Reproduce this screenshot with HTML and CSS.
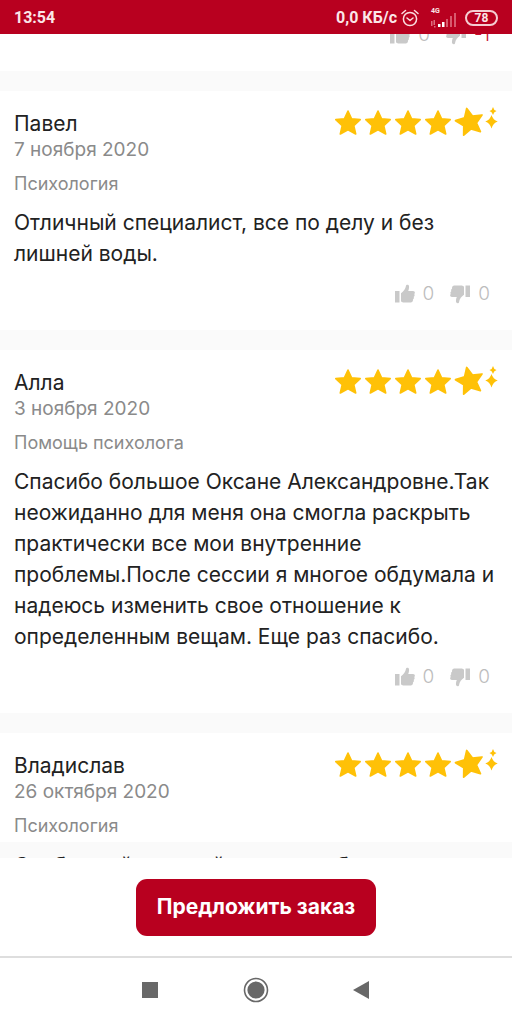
FILE: index.html
```html
<!DOCTYPE html>
<html lang="ru">
<head>
<meta charset="utf-8">
<meta name="viewport" content="width=device-width, initial-scale=1">
<title>Отзывы</title>
<link rel="stylesheet" href="styles.css">
</head>
<body>
<svg class="sprite" aria-hidden="true">
  <symbol id="star" viewBox="-14 -14 28 28">
    <path d="M0-12 3.600-4.200 12.200-3.400 5.800 2.600 7.700 11 0 6.800-7.700 11-5.800 2.600-12.200-3.400-3.600-4.200Z" stroke-width="1.600" stroke-linejoin="round"/>
  </symbol>
  <symbol id="rating" viewBox="0 0 164 32">
    <g fill="#ffc107" stroke="#ffc107">
      <use href="#star" x="-1" y="3" width="28" height="28"/>
      <use href="#star" x="29" y="3" width="28" height="28"/>
      <use href="#star" x="59" y="3" width="28" height="28"/>
      <use href="#star" x="89" y="3" width="28" height="28"/>
      <use href="#star" x="119" y="0" width="31" height="31" transform="rotate(-12 134.500 15.500)"/>
      <path stroke="none" d="M158 1q.6 3.200 3.500 4-2.900.8-3.500 4-.6-3.200-3.500-4 2.900-.8 3.500-4ZM156.500 9q1.600 5 6.200 6.500-4.600 1.500-6.200 7-1.600-5.500-6.200-7 4.600-1.500 6.200-6.500Z"/>
    </g>
  </symbol>
  <symbol id="thumb" viewBox="0 0 20 20">
    <path d="M0 7h4.500v11.500H0ZM6 9.200C8.500 7.500 10.500 5.200 11 1.800 11.200.4 13.800.4 14 2.200c.2 1.800-.2 3.400-.8 4.800H18c2 0 2.400 2.200 1.200 3 .8 1 .4 2.400-.5 2.800.5 1 0 2.200-.8 2.500.4 1.600-.6 3.200-2.200 3.200H9c-1.200 0-2-.5-3-1Z" fill="#c9c9c9"/>
  </symbol>
</svg>

<header class="status">
  <time class="status-time">13:54</time>
  <div class="status-info">
    <span>0,0 КБ/с</span>
    <svg class="alarm" viewBox="0 0 18 18" aria-label="Будильник" role="img">
      <g fill="none" stroke="#fbdde0" stroke-width="1.500" stroke-linecap="round" stroke-linejoin="round">
        <circle cx="9" cy="10" r="6.600"/><path d="M1 4.500 4.500 1.500M17 4.500 13.500 1.500M6 9l3 2.500L12 9"/>
      </g>
    </svg>
    <div class="signal">
      <span class="signal-type">4G</span>
      <svg class="signal-bars" viewBox="0 0 26 16" aria-hidden="true">
        <path d="M0 9h1.500v5H0ZM2.500 8H4v5H2.500ZM3 14h1.500v1.500H3Z" fill="#dc7080"/>
        <path d="M7 12h2.500v3H7ZM11 10h2.500v5H11Z" fill="#fff"/>
        <path d="M15 7h2v8h-2ZM19 4h2v11h-2ZM23 1h2v14h-2Z" fill="#d85a6e"/>
      </svg>
    </div>
    <span class="battery">78</span>
  </div>
</header>

<main class="reviews">
  <article class="card card-passed">
    <div class="votes">
      <button class="vote" type="button" aria-label="Полезно"><svg class="thumb"><use href="#thumb"/></svg><span>0</span></button>
      <button class="vote" type="button" aria-label="Бесполезно"><svg class="thumb thumb-down"><use href="#thumb"/></svg><span class="negative">-1</span></button>
    </div>
  </article>

  <article class="card">
    <div class="card-head"><h2 class="name">Павел</h2><svg class="rating" role="img" aria-label="5+"><use href="#rating"/></svg></div>
    <time class="date">7 ноября 2020</time>
    <p class="topic">Психология</p>
    <p class="text">Отличный специалист, все по делу и без лишней воды.</p>
    <div class="votes">
      <button class="vote" type="button" aria-label="Полезно"><svg class="thumb"><use href="#thumb"/></svg><span>0</span></button>
      <button class="vote" type="button" aria-label="Бесполезно"><svg class="thumb thumb-down"><use href="#thumb"/></svg><span>0</span></button>
    </div>
  </article>

  <article class="card">
    <div class="card-head"><h2 class="name">Алла</h2><svg class="rating" role="img" aria-label="5+"><use href="#rating"/></svg></div>
    <time class="date">3 ноября 2020</time>
    <p class="topic">Помощь психолога</p>
    <p class="text">Спасибо большое Оксане Александровне.Так неожиданно для меня она смогла раскрыть практически все мои внутренние проблемы.После сессии я многое обдумала и надеюсь изменить свое отношение к определенным вещам. Еще раз спасибо.</p>
    <div class="votes">
      <button class="vote" type="button" aria-label="Полезно"><svg class="thumb"><use href="#thumb"/></svg><span>0</span></button>
      <button class="vote" type="button" aria-label="Бесполезно"><svg class="thumb thumb-down"><use href="#thumb"/></svg><span>0</span></button>
    </div>
  </article>

  <article class="card card-loading">
    <div class="card-head"><h2 class="name">Владислав</h2><svg class="rating" role="img" aria-label="5+"><use href="#rating"/></svg></div>
    <time class="date">26 октября 2020</time>
    <p class="topic">Психология</p>
    <p class="text">Свободный и умный, он помог быстро</p>
  </article>
</main>

<footer class="order"><button class="order-button" type="button">Предложить заказ</button></footer>

<nav class="system-nav">
  <button type="button" class="nav-button" aria-label="Недавние"><svg viewBox="0 0 26 26"><path d="M5 5h16v16H5Z" fill="#686868"/></svg></button>
  <button type="button" class="nav-button" aria-label="Домой"><svg viewBox="0 0 26 26"><circle cx="13" cy="13" r="11.500" fill="none" stroke="#686868" stroke-width="1.600"/><circle cx="13" cy="13" r="8.600" fill="#686868"/></svg></button>
  <button type="button" class="nav-button" aria-label="Назад"><svg viewBox="0 0 26 26"><path d="M4 13 20 4v18Z" fill="#686868"/></svg></button>
</nav>
</body>
</html>
```
FILE: styles.css
```css
* { box-sizing: border-box; }

body {
  margin: 0;
  height: 100vh;
  display: flex;
  flex-direction: column;
  background: #fff;
  color: #222;
  font-family: Inter, "Open Sans", sans-serif;
}

h2, p { margin: 0; font-weight: 400; }

button {
  border: 0;
  padding: 0;
  background: none;
  font: inherit;
  color: inherit;
}

.sprite { display: none; }

.status {
  flex: none;
  height: 34px;
  padding: 2px 14px 0;
  display: flex;
  align-items: center;
  justify-content: space-between;
  background: #b8001f;
  color: #fbe6e8;
  font: 700 16px/20px Roboto, sans-serif;
}

.status-info { display: flex; align-items: center; gap: 4px; }
.alarm { width: 18px; height: 18px; }

.signal {
  height: 20px;
  margin: 0 4px 0 8px;
  display: grid;
}
.signal-type, .signal-bars { grid-area: 1 / 1; }
.signal-type { font-size: 7px; line-height: 7px; }
.signal-bars { width: 26px; height: 16px; align-self: end; }

.battery {
  width: 33px;
  border: 2px solid #f5cdd2;
  border-radius: 8px;
  font-size: 12px;
  line-height: 12px;
  text-align: center;
}

.reviews {
  flex: 1;
  min-height: 0;
  overflow: hidden;
  display: flex;
  flex-direction: column;
  gap: 20px;
  background: #fafafa;
}

.card {
  flex: none;
  padding: 19px 14px 26px;
  background: #fff;
}

/* Card scrolled under the status bar */
.card-passed { margin-top: -43px; }

.card-head { display: flex; justify-content: space-between; height: 28px; }
.name { font-size: 21px; line-height: 28px; }
.rating { width: 164px; height: 32px; margin: -4px -1px 0 0; }

.date, .topic {
  display: block;
  font-size: 19px;
  line-height: 24px;
  color: #8a8a8a;
}
.topic { margin-top: 10px; font-size: 18px; }

.text {
  margin-top: 11px;
  font-size: 21px;
  line-height: 31px;
}

/* The text area of a card that is still loading */
.card-loading { padding-bottom: 0; }
.card-loading .text {
  margin: 4px -14px 0;
  padding: 8px 14px 0;
  background: #fafafa;
}

.votes {
  margin-top: 15px;
  padding-right: 8px;
  display: flex;
  justify-content: flex-end;
  gap: 16px;
}
.vote {
  height: 20px;
  display: flex;
  align-items: center;
  gap: 8px;
  color: #bdbdbd;
  font-size: 19px;
  font-weight: 300;
  line-height: 20px;
}
.thumb { width: 20px; height: 20px; }
.thumb-down { transform: rotate(180deg); }
.negative { color: #c8102e; }

.order {
  flex: none;
  padding: 21px 14px 20px;
  display: flex;
  justify-content: center;
}
.order-button {
  padding: 14px 21px 15px;
  border-radius: 11px;
  background: #b8001f;
  color: #fff;
  font-size: 21px;
  font-weight: 700;
  line-height: 28px;
}

.system-nav {
  flex: none;
  height: 68px;
  padding: 0 96px 2px;
  border-top: 2px solid #dedede;
  display: flex;
  align-items: center;
  justify-content: center;
  gap: 80px;
}
.nav-button { width: 26px; height: 26px; }
.nav-button svg { display: block; width: 26px; height: 26px; }
```
